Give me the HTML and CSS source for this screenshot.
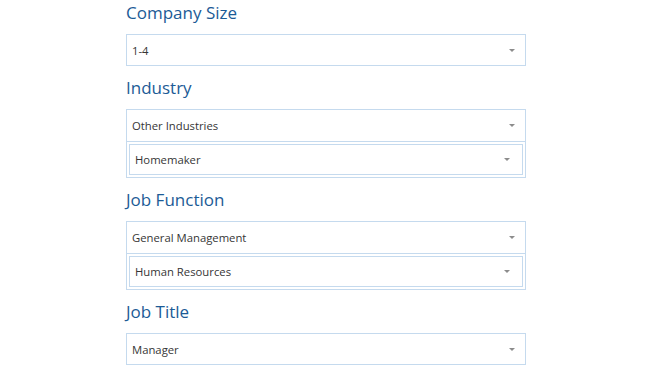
FILE: index.html
```html
<!DOCTYPE html>
<html>
    <head>
        <meta charset="utf-8" />
        <title>Profile</title>
        <meta name="viewport" content="width=device-width, initial-scale=1.0" />
        <link rel="stylesheet" href="styles.css">
    </head>

    <body>
        <main class="form">
            <section class="field">
                <h2>Company Size</h2>
                <div class="select single">
                    <span>1-4</span>
                    <i class="caret"></i>
                </div>
            </section>

            <section class="field">
                <h2>Industry</h2>
                <div class="group">
                    <div class="select">
                        <span>Other Industries</span>
                        <i class="caret"></i>
                    </div>
                    <div class="select nested">
                        <span>Homemaker</span>
                        <i class="caret"></i>
                    </div>
                </div>
            </section>

            <section class="field">
                <h2>Job Function</h2>
                <div class="group">
                    <div class="select">
                        <span>General Management</span>
                        <i class="caret"></i>
                    </div>
                    <div class="select nested">
                        <span>Human Resources</span>
                        <i class="caret"></i>
                    </div>
                </div>
            </section>

            <section class="field">
                <h2>Job Title</h2>
                <div class="select single">
                    <span>Manager</span>
                    <i class="caret"></i>
                </div>
            </section>
        </main>
    </body>
</html>
```

FILE: styles.css
```css
body {
    margin: 0;
    background: #fff;
    font-family: "Open Sans", sans-serif;
}

.form {
    width: 400px;
    margin-left: 126px;
    display: flex;
    flex-direction: column;
    gap: 9px;
}

.field h2 {
    margin: 0 0 9px;
    height: 25px;
    line-height: 25px;
    font-size: 17px;
    font-weight: 400;
    color: #1c5b96;
}

.select {
    box-sizing: border-box;
    height: 31px;
    display: flex;
    align-items: center;
    justify-content: space-between;
    padding: 0 10px 0 5px;
    font-size: 11.3px;
    color: #363636;
    background: #fff;
}

.select.single {
    height: 32px;
    border: 1px solid #c5daee;
}

.group {
    border: 1px solid #c5daee;
}

.group > .select:first-child {
    height: 32px;
    border-bottom: 1px solid #c5daee;
}

.select.nested {
    margin: 2px;
    border: 1px solid #c5daee;
    padding: 0 12px 0 5px;
}

.caret {
    width: 0;
    height: 0;
    border-left: 3px solid transparent;
    border-right: 3px solid transparent;
    border-top: 3px solid #8c8c8c;
}
```
